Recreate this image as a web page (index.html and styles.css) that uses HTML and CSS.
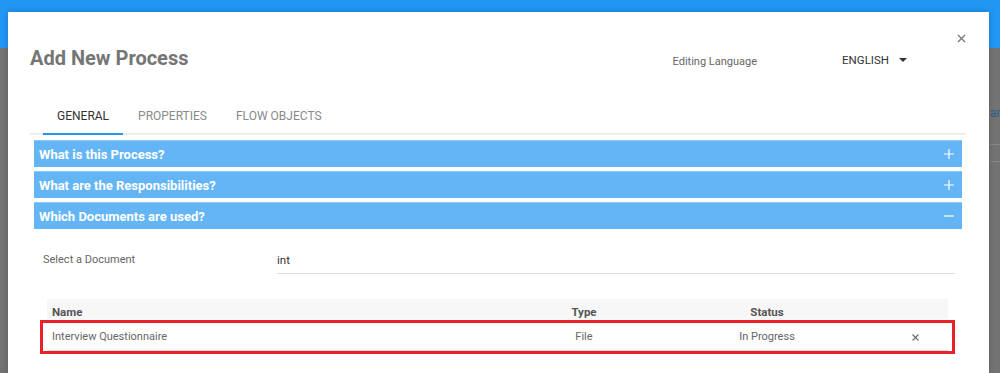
FILE: index.html
```html
<!DOCTYPE html>
<html>
<head>
<meta charset="utf-8">
<link rel="stylesheet" href="styles.css">
</head>
<body>
<div class="page">
  <div class="topbar"></div>
  <div class="backdrop">
    <div class="peek">
      <div class="peek-text">an</div>
      <div class="peek-line first"></div>
      <div class="peek-line"></div>
    </div>
  </div>

  <div class="modal">
    <button class="close-btn" aria-label="Close">
      <svg width="9" height="9" viewBox="0 0 9 9"><path d="M1 1L8 8M8 1L1 8" stroke="#7a7a7a" stroke-width="1.4" fill="none"/></svg>
    </button>
    <div class="modal-header">
      <h1 class="title">Add New Process</h1>
      <span class="lang-label">Editing Language</span>
      <span class="lang-select">ENGLISH<span class="caret"></span></span>
    </div>

    <div class="tabs">
      <div class="tab active">GENERAL</div>
      <div class="tab">PROPERTIES</div>
      <div class="tab">FLOW OBJECTS</div>
    </div>

    <div class="accordion">
      <div class="acc-header">
        <span>What is this Process?</span>
        <svg class="acc-icon" width="10" height="10" viewBox="0 0 10 10"><path d="M0 5H10M5 0V10" stroke="#fff" stroke-width="1.2"/></svg>
      </div>
      <div class="acc-header">
        <span>What are the Responsibilities?</span>
        <svg class="acc-icon" width="10" height="10" viewBox="0 0 10 10"><path d="M0 5H10M5 0V10" stroke="#fff" stroke-width="1.2"/></svg>
      </div>
      <div class="acc-header">
        <span>Which Documents are used?</span>
        <svg class="acc-icon" width="10" height="10" viewBox="0 0 10 10"><path d="M0 5H10" stroke="#fff" stroke-width="1.2"/></svg>
      </div>

      <div class="acc-body">
        <div class="form-row">
          <span class="form-label">Select a Document</span>
          <div class="form-input">int</div>
        </div>

        <div class="doc-table">
          <div class="t-row t-head">
            <span class="c-name">Name</span>
            <span class="c-type">Type</span>
            <span class="c-status">Status</span>
            <span class="c-action"></span>
          </div>
          <div class="t-row t-body">
            <span class="c-name">Interview Questionnaire</span>
            <span class="c-type">File</span>
            <span class="c-status">In Progress</span>
            <span class="c-action">
              <svg width="7" height="7" viewBox="0 0 7 7"><path d="M0.5 0.5L6.5 6.5M6.5 0.5L0.5 6.5" stroke="#6a6a6a" stroke-width="1.1" fill="none"/></svg>
            </span>
            <div class="highlight"></div>
          </div>
        </div>
      </div>
    </div>
  </div>
</div>
</body>
</html>
```

FILE: styles.css
```css
* { box-sizing: border-box; }

html, body {
  margin: 0;
  padding: 0;
}

body {
  width: 1000px;
  height: 373px;
  overflow: hidden;
  font-family: Roboto, "Liberation Sans", sans-serif;
  background: #737373;
}

.page {
  position: relative;
  width: 1000px;
  height: 373px;
  display: flex;
  flex-direction: column;
}

.topbar {
  height: 48px;
  background: #2196f3;
  box-shadow: 0 2px 4px rgba(0,0,0,0.25);
  flex: none;
}

.backdrop {
  flex: 1;
  background: #737373;
}

.peek {
  padding: 57px 0 0 990px;
}

.peek-text {
  font-size: 12px;
  line-height: 16px;
  color: #2c5f8f;
  white-space: nowrap;
}

.peek-line {
  height: 1px;
  background: #858585;
  margin-top: 16px;
}

.peek-line.first {
  margin-top: 23px;
}

.modal {
  position: absolute;
  left: 8px;
  top: 12px;
  width: 981px;
  bottom: 0;
  background: #fff;
  box-shadow: 0 0 6px rgba(0,0,0,0.2);
}

.close-btn {
  position: absolute;
  top: 22px;
  right: 23px;
  border: 0;
  background: none;
  padding: 0;
  width: 9px;
  height: 9px;
  line-height: 0;
  cursor: pointer;
}

.modal-header {
  display: flex;
  align-items: flex-start;
  padding: 34px 82px 0 22px;
}

.title {
  flex: 1;
  margin: 0;
  font-size: 20px;
  line-height: 24px;
  font-weight: 700;
  color: #757575;
}

.lang-label {
  margin-top: 8px;
  margin-right: 85px;
  font-size: 11px;
  line-height: 16px;
  color: #666;
}

.lang-select {
  display: flex;
  align-items: center;
  margin-top: 6px;
  font-size: 11.5px;
  line-height: 16px;
  color: #333;
}

.caret {
  margin-left: 10px;
  width: 0;
  height: 0;
  border-left: 4px solid transparent;
  border-right: 4px solid transparent;
  border-top: 4px solid #333;
}

.tabs {
  display: flex;
  margin: 28px 23px 0 22px;
  padding-left: 13px;
  border-bottom: 2px solid #eeeeee;
}

.tab {
  padding: 10px 14px 9px;
  margin-bottom: -2px;
  font-size: 12px;
  line-height: 16px;
  color: #8a8a8a;
  border-bottom: 2px solid transparent;
}

.tab + .tab {
  padding-left: 15px;
}

.tab.active {
  color: #333;
  border-bottom-color: #2196f3;
}

.accordion {
  margin: 5px 27px 0 26px;
  display: flex;
  flex-direction: column;
  gap: 4px;
}

.acc-header {
  height: 27px;
  display: flex;
  align-items: center;
  justify-content: space-between;
  padding: 0 8px 0 5px;
  background: #64b5f6;
  border-top: 1px solid #8ec8f8;
  color: #fff;
  font-size: 13px;
  font-weight: 700;
}

.acc-icon {
  flex: none;
}

.acc-body {
  padding: 15px 7px 0 9px;
}

.form-row {
  display: flex;
  align-items: flex-start;
}

.form-label {
  width: 234px;
  flex: none;
  padding-top: 4px;
  font-size: 11px;
  line-height: 16px;
  color: #666;
}

.form-input {
  flex: 1;
  padding: 4px 0 5px;
  font-size: 11.5px;
  line-height: 16px;
  color: #333;
  border-bottom: 1px solid #dddddd;
}

.doc-table {
  margin: 25px 7px 0 4px;
}

.t-row {
  display: grid;
  grid-template-columns: 470px 134px 232px 1fr;
  font-size: 11px;
}

.t-head {
  height: 20px;
  padding-top: 6px;
  line-height: 14px;
  background: #f7f7f7;
  font-weight: 700;
  font-size: 11.5px;
  color: #555;
}

.t-body {
  position: relative;
  margin-top: 5px;
  padding: 5px 0;
  line-height: 16px;
  color: #666;
  border-bottom: 1px solid #dddddd;
}

.c-name {
  padding-left: 5px;
}

.c-type, .c-status {
  text-align: center;
}

.c-action {
  padding-left: 29px;
  display: flex;
  align-items: center;
}

.highlight {
  position: absolute;
  left: -7px;
  right: -7px;
  top: -4px;
  bottom: -4px;
  border: 3px solid #e8202a;
  pointer-events: none;
}
```
